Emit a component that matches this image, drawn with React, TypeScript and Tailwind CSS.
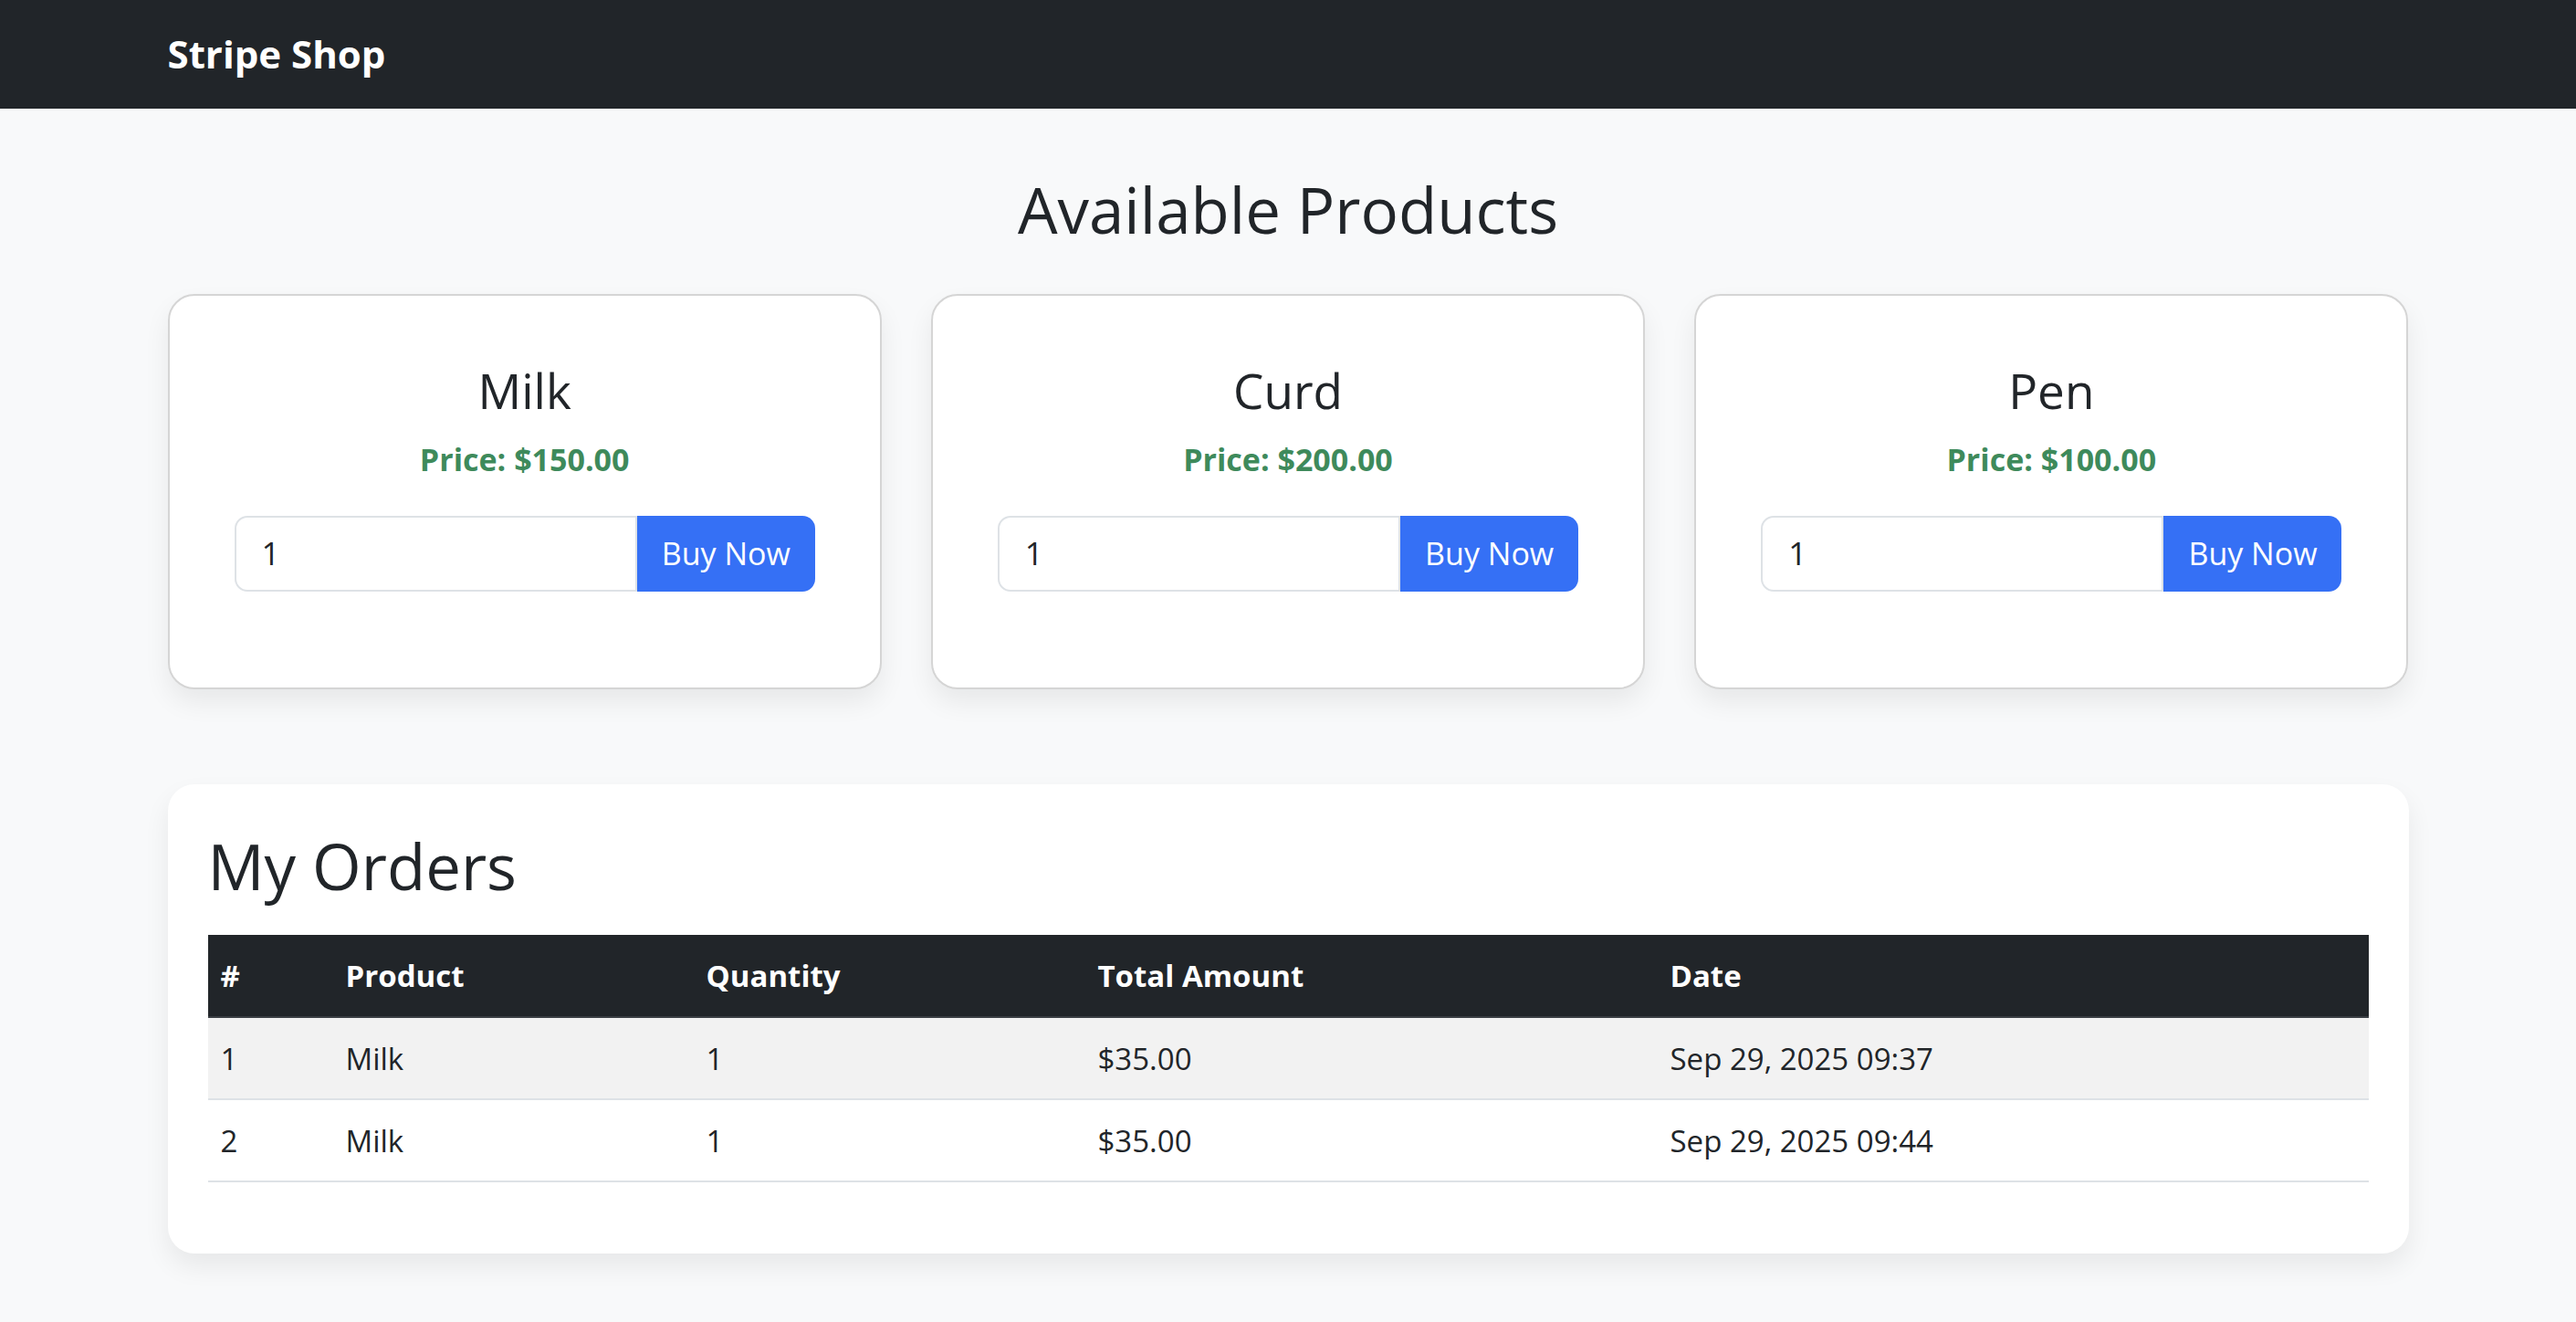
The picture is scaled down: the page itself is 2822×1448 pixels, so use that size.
import React from "react";

const products = [
  { name: "Milk", price: "$150.00" },
  { name: "Curd", price: "$200.00" },
  { name: "Pen", price: "$100.00" },
];

const orders = [
  { id: 1, product: "Milk", qty: 1, total: "$35.00", date: "Sep 29, 2025 09:37" },
  { id: 2, product: "Milk", qty: 1, total: "$35.00", date: "Sep 29, 2025 09:44" },
];

function ProductCard({ name, price }: { name: string; price: string }) {
  return (
    <div className="bg-white border-2 border-[#d5d5d5] rounded-[29px] shadow-[0_14px_29px_rgba(0,0,0,0.07)] px-[71px] pt-[72px] pb-[105px] flex flex-col items-center">
      <h3 className="text-[53px] leading-[1.2] font-normal text-[#212529]">{name}</h3>
      <p className="mt-[20px] text-[34px] leading-[1.45] font-bold text-[#3e8a5b]">Price: {price}</p>
      <div className="mt-[36px] flex w-full h-[83px]">
        <input
          type="number"
          defaultValue={1}
          className="flex-1 min-w-0 border-2 border-[#dee2e6] rounded-l-[14px] px-[28px] text-[35px] text-[#212529] bg-white outline-none"
        />
        <button className="w-[195px] bg-[#3570f5] text-white text-[34px] rounded-r-[14px]">Buy Now</button>
      </div>
    </div>
  );
}

export default function App() {
  return (
    <div className="min-h-screen bg-[#f8f9fa] text-[#212529]" style={{ fontFamily: '"Open Sans", "Noto Sans", sans-serif' }}>
      <nav className="bg-[#212529] h-[119px] flex items-center">
        <div className="w-[2455px] mx-auto">
          <span className="text-white font-bold text-[42px] leading-none">Stripe Shop</span>
        </div>
      </nav>

      <main className="w-[2455px] mx-auto">
        <h1 className="mt-[69px] text-center text-[69px] leading-[1.2] font-normal">Available Products</h1>

        <div className="mt-[51px] grid grid-cols-3 gap-[54px]">
          {products.map((p) => (
            <ProductCard key={p.name} {...p} />
          ))}
        </div>

        <section className="mt-[104px] mb-[75px] bg-white rounded-[29px] shadow-[0_14px_29px_rgba(0,0,0,0.07)] px-[44px] pt-[48px] pb-[78px]">
          <h2 className="text-[69px] leading-[1.2] font-normal mb-[35px]">My Orders</h2>
          <table className="w-full table-fixed border-collapse text-[33px]">
            <colgroup>
              <col className="w-[137px]" />
              <col className="w-[395px]" />
              <col className="w-[429px]" />
              <col className="w-[627px]" />
              <col />
            </colgroup>
            <thead>
              <tr className="bg-[#212529] text-white h-[90px] border-b-2 border-[#3a3e43]">
                <th className="text-left font-bold px-[14px]">#</th>
                <th className="text-left font-bold px-[14px]">Product</th>
                <th className="text-left font-bold px-[14px]">Quantity</th>
                <th className="text-left font-bold px-[14px]">Total Amount</th>
                <th className="text-left font-bold px-[14px]">Date</th>
              </tr>
            </thead>
            <tbody>
              {orders.map((o, i) => (
                <tr key={o.id} className={`h-[90px] border-b-2 border-[#dee2e6] ${i % 2 === 0 ? "bg-[#f2f2f2]" : "bg-white"}`}>
                  <td className="px-[14px]">{o.id}</td>
                  <td className="px-[14px]">{o.product}</td>
                  <td className="px-[14px]">{o.qty}</td>
                  <td className="px-[14px]">{o.total}</td>
                  <td className="px-[14px]">{o.date}</td>
                </tr>
              ))}
            </tbody>
          </table>
        </section>
      </main>
    </div>
  );
}
